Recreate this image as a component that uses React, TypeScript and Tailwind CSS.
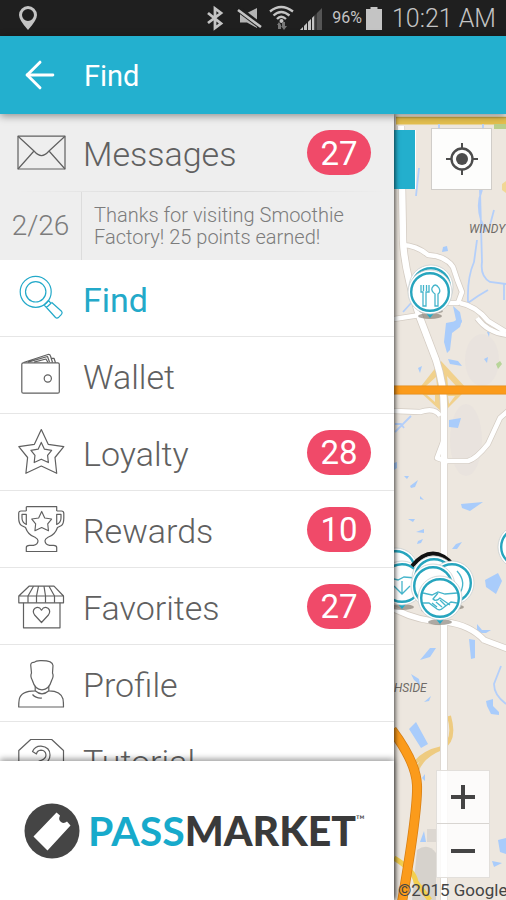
import type { ReactNode } from "react"
import { ArrowLeft } from "lucide-react"

const STAR = "M24.3 1.5 L31.2 16.3 L46.8 18.7 L38 29.5 L39.7 45.3 L24.3 38 L8.9 45.3 L10.6 29.5 L1.8 18.7 L17.4 16.3 Z"

function Icon({ children }: { children: ReactNode }) {
  return (
    <svg
      viewBox="0 0 48 48"
      className="size-12 shrink-0 overflow-visible"
      fill="none"
      stroke="currentColor"
      strokeWidth="1.2"
      strokeLinejoin="round"
      aria-hidden="true"
    >
      {children}
    </svg>
  )
}

const MailIcon = () => (
  <Icon>
    <rect x="1" y="7.2" width="47" height="32.8" />
    <path d="M1 7.2 L17 22 Q21 26.6 24.5 26.6 Q28 26.6 32 22 L48 7.2 M17 22 L1 40 M32 22 L48 40" />
  </Icon>
)

const FindIcon = () => (
  <Icon>
    <circle cx="18.7" cy="17.8" r="15.5" />
    <circle cx="18.7" cy="17.8" r="10.2" />
    <path d="M27 31 L31.5 26.5 L34 29.3 L29.5 33.5 Z M29.5 33.5 L38.5 43.5 Q40 44.8 41.8 43.2 L44.5 40.3 Q45.8 38.8 44.5 37.2 L34.5 28.2" />
  </Icon>
)

const WalletIcon = () => (
  <Icon>
    <rect x="4.8" y="11.8" width="37.5" height="30.4" rx="1.5" />
    <circle cx="30.8" cy="27.5" r="3.6" />
    <path d="M6.5 11.5 L31 3.5 Q33 3.2 33.5 5 L35.5 11.5 M11 11.2 L30.5 5.5 L32.5 11 M17 11.2 L29 8 L31 11.5 M34 7.3 L37 7.3 L38.5 11.8" />
  </Icon>
)

const StarIcon = () => (
  <Icon>
    <path d={STAR} />
    <path d={STAR} transform="translate(13.1 13.7) scale(.46)" strokeWidth="2.6" />
  </Icon>
)

const TrophyIcon = () => (
  <Icon>
    <path d="M9.3 1.7 H39.7 V6 M9.3 1.7 V6 M9.3 6 H4 Q1.7 6 1.7 8.5 V13 Q1.7 18.5 4.5 20.5 L8.5 22.5 Q11 30 18 32.3 Q21.2 34 21 36 Q20.8 39.5 16.5 40.3 H12.5 Q9.3 40.3 9.3 42.5 V46.5 H39.7 V42.5 Q39.7 40.3 36.5 40.3 H32.5 Q28.2 39.5 28 36 Q27.8 34 31 32.3 Q38 30 40.5 22.5 L44.5 20.5 Q46.8 18.5 46.8 13 V8.5 Q46.8 6 44.5 6 H39.7" />
    <path d="M5 9.3 H9.3 V19.5 Q5 17.5 5 13 Z M44 9.3 H39.7 V19.5 Q44 17.5 44 13 Z" />
    <path d={STAR} transform="translate(14 5.8) scale(.44)" strokeWidth="2.6" />
  </Icon>
)

const ShopIcon = () => (
  <Icon>
    <path d="M12 4.2 H37 L46.5 14 V20.8 H1.8 V14 Z M1.8 14 H46.5" />
    <path d="M16.5 4.2 L11 14 V20.8 M21.5 4.2 L19.5 14 V20.8 M27 4.2 L28.5 14 V20.8 M32 4.2 L37.5 14 V20.8" />
    <path d="M6.5 20.8 V45.8 H43 V20.8" />
    <path d="M24.5 40.5 L17.6 33 Q14.8 29 18 26.3 Q22 24 24.5 28.2 Q27 24 31 26.3 Q34.2 29 31.4 33 Z" />
  </Icon>
)

const PersonIcon = () => (
  <Icon>
    <path d="M14.5 14 L13.7 6 Q14 3 17 3.4 Q19 1.5 24 1.7 Q35.5 1.5 36 6.5 L35.5 14 Q37 17 34.8 21 Q32 30.8 25 30.8 Q18 30.8 15.2 21 Q13 17 14.5 14 Z" />
    <path d="M18.2 27 V31.8 Q4 32 2.3 40 Q1.7 43 1.7 48 H46.5 Q46.5 43 46 40 Q44 32 31.8 31.8 V27" />
    <path d="M18.2 31.8 Q25 38 31.8 31.8 M15.5 35.5 Q19 39.5 25 39" />
  </Icon>
)

const HelpIcon = () => (
  <Icon>
    <path d="M13.7 3.5 H34.7 L46.5 14.5 V34.5 L34.7 45.5 H13.7 L1.8 34.5 V14.5 Z" />
    <path d="M15.5 15.5 Q18 10 24 10.2 Q33 11 33 19 Q33 26 26 28 V33 H22 V25 Q29 23.5 29 19 Q28.5 14.3 24 14.2 Q20 14.5 19.5 18 Z" />
  </Icon>
)

const items = [
  { label: "Find", icon: <FindIcon />, active: true },
  { label: "Wallet", icon: <WalletIcon /> },
  { label: "Loyalty", icon: <StarIcon />, count: 28 },
  { label: "Rewards", icon: <TrophyIcon />, count: 10 },
  { label: "Favorites", icon: <ShopIcon />, count: 27 },
  { label: "Profile", icon: <PersonIcon /> },
  { label: "Tutorial", icon: <HelpIcon /> },
]

function Badge({ count }: { count: number }) {
  return (
    <span className="ml-auto flex h-[45px] w-16 items-center justify-center rounded-full bg-[#f04a69] pt-0.5 text-[33px] font-normal text-white">
      {count}
    </span>
  )
}

function StatusBar() {
  return (
    <div className="flex h-9 shrink-0 items-center bg-[#1f1f1f] pr-2.5 pl-[18px] text-[#c4c4c4]">
      <svg viewBox="0 0 20 26" className="h-[26px] w-5" aria-hidden="true">
        <path fill="currentColor" fillRule="evenodd" d="M10 1 A9 9 0 0 0 1 10 Q1 15 10 25 Q19 15 19 10 A9 9 0 0 0 10 1 Z M10 4 A6 6 0 1 1 10 16 A6 6 0 1 1 10 4 Z" />
      </svg>
      <svg viewBox="0 0 120 28" className="ml-auto h-7 w-[120px]" aria-hidden="true">
        <path d="M4 9 L17 19.5 L11 24 V4.500 L17 9 L4 19" fill="none" stroke="currentColor" strokeWidth="2.8" />
        <path d="M36 9 H43 L53 4 V24 L43 18.500 H36 Z" fill="#b4b4b4" />
        <path d="M33 4 L58 23" stroke="#1f1f1f" strokeWidth="6" />
        <path d="M34 6 L57 23" stroke="currentColor" strokeWidth="2.6" />
        <g fill="none" stroke="currentColor" strokeWidth="2.3">
          <path d="M66 7.500 Q77 -1.500 89 7.500" />
          <path d="M69.500 11.500 Q77 4.500 85.500 11.500" />
          <path d="M73 15 Q77 10.500 82 15" />
        </g>
        <circle cx="77.500" cy="17" r="2" fill="currentColor" />
        <path d="M73 21 L75 18 L77 21 V25 H74 V21 Z M78 22 V18 H81 V22 H83 L80 26 L77 22 Z" fill="#777" />
        <path d="M118 4 V26 H96 Z" fill="#555" />
        <path d="M96 26 L110 12 V26 Z" fill="currentColor" />
        <path d="M99.500 20 V26 M103.500 17 V26 M107.500 12 V26 M112 9 V26" stroke="#1f1f1f" strokeWidth="1" />
      </svg>
      <span className="ml-2 text-base">96%</span>
      <svg viewBox="0 0 16 24" className="ml-1 h-6 w-4 shrink-0" fill="currentColor" aria-hidden="true">
        <path d="M4.500 1 H11.500 V3 H16 V24 H0 V3 H4.500 Z" />
      </svg>
      <span className="ml-2.5 pt-0.5 text-[25px] leading-8 font-light">10:21 AM</span>
    </div>
  )
}

function Pin({ x, y, children }: { x: number; y: number; children?: ReactNode }) {
  return (
    <g transform={`translate(${x} ${y})`}>
      <ellipse cx="0" cy="24" rx="12" ry="3" fill="#776f65" opacity=".6" />
      <path d="M0 26 L-6 19 H6 Z" fill="#23a9c6" />
      <circle r="22" fill="#fff" stroke="#c3cacb" strokeWidth=".7" />
      <circle r="18.800" fill="#fff" stroke="#27a5be" strokeWidth="2.4" />
      <g fill="none" stroke="#45b5cb" strokeWidth="1.300">{children}</g>
    </g>
  )
}

const Handshake = () => (
  <path d="M-17 -5 L-8 -3 L-2 -6 L5 -4 L17 -5 M-17 5 L-11 5 L-3 11 Q0 13 3 10 L11 4 L17 5 M-2 -5 L-7 1 Q-4 4 0 0 L10 7 M-8 5 L-3 9 M-4 4 L2 9 M0 2 L6 8" />
)

function MapDrawing() {
  return (
    <svg viewBox="394 114 112 786" preserveAspectRatio="xMinYMin slice" className="absolute inset-0 size-full" aria-hidden="true">
      <rect x="394" y="114" width="400" height="900" fill="#ede7df" />
      <ellipse cx="482" cy="360" rx="17" ry="26" fill="#e9e3de" />
      <ellipse cx="466" cy="440" rx="16" ry="36" fill="#e9e3de" />
      <path d="M417 850 Q428 842 436 853 V900 H412 Z" fill="#d6d2cc" />
      <rect x="427" y="829" width="12" height="13" fill="#dcd7d1" />
      <path d="M396 121 H506" stroke="#e4bf4e" strokeWidth="7" />
      <path d="M396 117.500 H506" stroke="#c6a745" strokeWidth="1.500" />
      <path d="M494 124 H506 V129 H494 Z" fill="#b9cf8b" />
      <path d="M502 184 L506 181 V193 L502 190 Z" fill="#f1d795" />

      <g fill="none" stroke="#b4cffa" strokeWidth="1.800">
        <path d="M439 124 V130 M419 168 L416 196" />
        <path d="M483 124 V130 M482 190 Q476 204 481 220 L486 232 M480 190 L482 262 Q480 276 490 282 L506 284 M494 210 L490 225 M477 240 L474 262 Q467 278 468 302" />
        <path d="M465 305 L478 296 L488 290 M403 312 L412 302 M504 284 V300" />
        <path d="M395 432 L411 416 M395 424 H401 L404 428" />
        <path d="M501 666 L494 684 Q494 695 506 704" />
      </g>
      <g fill="#a9ccfb">
        <path d="M443 247 L447 246 L448 251 L442 252 Z" />
        <path d="M453 306 L460 312 L462 322 L454 330 L446 328 L456 320 Z" />
        <path d="M446 323 L462 320 L460 327 L452 333 L450 350 L447 353 L444 342 Z" />
        <path d="M448 359 L458 361 L462 366 L450 364 Z M418 368 L422 366 L420 373 Z M484 359 L488 357 L487 363 Z M487 332 L490 330 L489 337 Z" />
        <path d="M449 420 L461 418 L458 428 L449 427 Z M410 486 L418 480 L415 487 L411 488 Z M404 476 H409 L407 479 Z M408 519 H415 L413 522 Z M416 532 L424 529 V533 Z M420 496 L424 500 L420 499 Z" />
        <path d="M461 504 L483 502 L470 511 L462 508 Z M394 463 L397 462 V468 L394 470 Z" />
        <path d="M418 541 L423 539 L421 543 L417 544 Z M452 549 L456 544 L462 542 L457 549 Z M485 580 L498 573 L502 581 L496 594 L486 587 Z" />
        <path d="M477 624 L482 630 H491 L486 633 H477 Z M469 639 L475 640 V658 L471 659 Z M420 660 L430 648 L436 648 L430 657 Z" />
        <path d="M411 674 L419 679 L420 685 L414 680 Z M424 702 L431 696 L429 701 Z M409 729 L416 722 L428 744 L421 748 Z" />
        <path d="M486 701 L493 699 V706 L499 712 V715 L491 714 L487 706 Z M420 842 L424 831 L426 842 Z M422 778 L425 774 V781 Z M498 840 L506 838 V854 L500 852 Z M492 861 L502 863 L494 867 Z" />
      </g>
      <path d="M496 364 L500 361 L502 364 L498 369 Z" fill="#b8d59a" />

      <path d="M441 361 L467 389 L443 413 L418 390 Z" fill="#f1d18c" />
      <path d="M426 386 L436 377 L437 386 Z M447 376 L456 386 H448 Z M427 395 L435 402 V395 Z M448 396 H455 L449 404 Z" fill="#ede7df" />
      <path d="M449 716 Q456 740 442 748 Q420 757 416 773 M442 748 Q424 752 415 763" fill="none" stroke="#eecb80" strokeWidth="4" />

      <g fill="none" strokeLinejoin="round">
        <g stroke="#d4ccc3">
          <path d="M401 126 L403 240 Q404 270 420 318 L436 360 Q444 384 444 410 V900" strokeWidth="8" />
          <path d="M402 245 Q416 245 428 255 Q446 256 453 267 Q457 280 462 292 L458 303 L446 303 M460 303 Q476 306 488 321 L506 332 M394 319 L420 315 M440 416 Q435 407 420 412 L394 411 M443 442 L437 458 L446 461 H468 Q476 459 488 444 L500 418 L508 411 M477 318 Q488 333 508 335" strokeWidth="6" />
          <path d="M394 609 Q420 622 446 622 Q470 625 484 640 L508 649" strokeWidth="7" />
        </g>
        <g stroke="#fff">
          <path d="M401 126 L403 240 Q404 270 420 318 L436 360 Q444 384 444 410 V900" strokeWidth="6.500" />
          <path d="M402 245 Q416 245 428 255 Q446 256 453 267 Q457 280 462 292 L458 303 L446 303 M460 303 Q476 306 488 321 L506 332 M394 319 L420 315 M440 416 Q435 407 420 412 L394 411 M443 442 L437 458 L446 461 H468 Q476 459 488 444 L500 418 L508 411 M477 318 Q488 333 508 335" strokeWidth="4.500" />
          <path d="M394 609 Q420 622 446 622 Q470 625 484 640 L508 649" strokeWidth="5.500" />
        </g>
      </g>
      <path d="M394 390 H620" stroke="#e28a18" strokeWidth="9" />
      <path d="M394 390 H620" stroke="#fb9b1b" strokeWidth="7.500" />
      <path d="M394 858 Q414 870 416 882 L430 900" fill="none" stroke="#f3cf4f" strokeWidth="5" />
      <path d="M392 730 Q416 762 417 785 Q418 810 402 902" fill="none" stroke="#d77f13" strokeWidth="10" />
      <path d="M392 730 Q416 762 417 785 Q418 810 402 902" fill="none" stroke="#fb9b1b" strokeWidth="8.500" />

      <Pin x={431} y={287} />
      <Pin x={430} y={292}>
        <path d="M-9 -7 V0 H-7 V14 H-4 V0 H-1 V-7 M-6.500 -7 V-1 M-3.500 -7 V-1 M5 14 V2 Q1 -1 2 -4 Q5 -10 9 -4 Q11 0 8 2 V14 Z" />
      </Pin>
      <Pin x={396} y={570} />
      <Pin x={402} y={583}>
        <path d="M-12 -5 L-4 -3 L2 -6 L14 -5 M-8 3 L0 11 L8 3 M0 -2 V10" />
      </Pin>
      <path d="M412 566 Q433 541 454 566" fill="none" stroke="#111" strokeWidth="4" />
      <Pin x={434} y={578} />
      <Pin x={452} y={583}><path d="M5 -12 Q16 0 6 13" /></Pin>
      <Pin x={433} y={586} />
      <Pin x={440} y={598}><Handshake /></Pin>
      <Pin x={520} y={547} />
    </svg>
  )
}

function MapPane() {
  return (
    <main className="relative w-28 shrink-0 overflow-hidden text-[#6f6b67]">
      <MapDrawing />
      <div className="absolute top-4 left-0 h-[59px] w-[22px] border-r border-white bg-[#23afcd]" />
      <button aria-label="My location" className="absolute top-3.5 right-3.5 flex h-[62px] w-[61px] items-center justify-center border border-[#d0cdc9] bg-white/90 text-[#4c4c4c]">
        <svg viewBox="0 0 32 32" className="size-8" fill="none" stroke="currentColor" strokeWidth="2.4" aria-hidden="true">
          <circle cx="16" cy="16" r="10.500" />
          <circle cx="16" cy="16" r="6" fill="currentColor" stroke="none" />
          <path d="M16 0 V5 M16 27 V32 M0 16 H5 M27 16 H32" strokeWidth="2" />
        </svg>
      </button>
      <span className="absolute top-[107px] left-[75px] text-xs italic">WINDY</span>
      <span className="absolute top-[566px] left-0 text-xs italic">HSIDE</span>
      <div className="absolute right-4 bottom-[22px] flex w-[54px] flex-col divide-y divide-[#d8d5d1] border border-[#e2dfdb] bg-white/85 text-[#444]">
        <button aria-label="Zoom in" className="flex h-[53px] items-center justify-center">
          <svg viewBox="0 0 24 24" className="size-6" stroke="currentColor" strokeWidth="4" aria-hidden="true">
            <path d="M0 12 H24 M12 0 V24" />
          </svg>
        </button>
        <button aria-label="Zoom out" className="flex h-[53px] items-center justify-center">
          <svg viewBox="0 0 24 24" className="size-6" stroke="currentColor" strokeWidth="4" aria-hidden="true">
            <path d="M0 12 H24" />
          </svg>
        </button>
      </div>
      <span className="absolute bottom-0 left-1 text-[17px] leading-5 whitespace-nowrap text-[#444]">©2015 Google</span>
    </main>
  )
}

function Logo() {
  return (
    <div className="flex items-center">
      <svg viewBox="0 0 56 56" className="size-14 shrink-0" aria-hidden="true">
        <circle cx="28" cy="28" r="27.500" fill="#454545" />
        <path d="M32.500 9.500 L36 12.500 Q34 17 37 19 Q40 21 43 18.500 L46.500 22.500 L23.500 47.500 L9.500 33.500 Z" fill="#fff" />
      </svg>
      <span className="ml-2 flex font-[Lato] text-[41px] leading-none">
        <span className="font-bold text-[#17aacb]">PASS</span>
        <span className="font-black text-[#3a3a3a]">MARKET</span>
        <sup className="top-0 mt-1 text-xs leading-none text-[#3a3a3a]">™</sup>
      </span>
    </div>
  )
}

export default function App() {
  return (
    <div className="flex h-screen flex-col overflow-hidden bg-white font-[Roboto,sans-serif]">
      <StatusBar />
      <header className="relative z-20 flex h-[78px] shrink-0 items-center bg-[#23b0cf] pl-[18px] text-white shadow-[0_2px_8px_rgba(0,0,0,0.4)]">
        <button aria-label="Back">
          <ArrowLeft className="size-11" strokeWidth={1.6} />
        </button>
        <h1 className="ml-[22px] pt-1 text-[29px]">Find</h1>
      </header>

      <div className="flex min-h-0 flex-1">
        <aside className="relative z-10 flex min-w-0 flex-1 flex-col bg-white shadow-[1px_0_5px_rgba(0,0,0,0.75)]">
          <nav className="min-h-0 flex-1 overflow-hidden text-[34px] font-light text-[#606060]">
            <div className="bg-[#eee]">
              <a href="#messages" className="flex h-[77px] items-center gap-[18px] pr-[23px] pl-[17px]">
                <MailIcon />
                <span className="pt-1">Messages</span>
                <Badge count={27} />
              </a>
              <div className="mr-2 ml-4 h-px bg-linear-to-r from-transparent via-[#d4d4d4] to-transparent" />
              <a href="#latest" className="flex h-[68px] text-[#7c7c7c]">
                <span className="flex w-[82px] shrink-0 items-center justify-center border-r border-[#dcdcdc] text-[28px]">2/26</span>
                <p className="self-center pl-3 text-xl leading-[22px]">
                  Thanks for visiting Smoothie
                  <br />
                  Factory! 25 points earned!
                </p>
              </a>
            </div>
            <ul>
              {items.map((item) => (
                <li key={item.label} className="border-b border-[#e6e6e6]">
                  <a
                    href={`#${item.label.toLowerCase()}`}
                    className={
                      item.active
                        ? "flex h-[76px] items-center gap-[18px] pr-[23px] pl-[17px] font-normal text-[#23a9c9]"
                        : "flex h-[76px] items-center gap-[18px] pr-[23px] pl-[17px]"
                    }
                  >
                    {item.icon}
                    <span className="pt-1">{item.label}</span>
                    {item.count && <Badge count={item.count} />}
                  </a>
                </li>
              ))}
            </ul>
          </nav>
          <footer className="relative flex h-[139px] shrink-0 items-center bg-white pl-6 shadow-[0_-2px_6px_rgba(0,0,0,0.4)]">
            <Logo />
          </footer>
        </aside>
        <MapPane />
      </div>
    </div>
  )
}
